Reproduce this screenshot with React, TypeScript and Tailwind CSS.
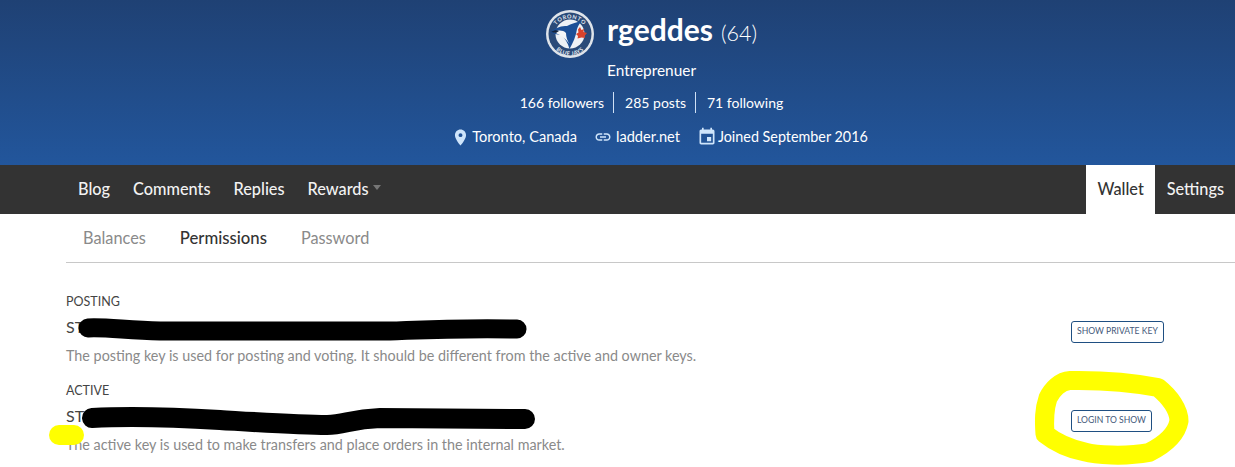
const font = { fontFamily: '"Lato", "Liberation Sans", sans-serif' };

function Logo() {
  return (
    <svg viewBox="0 0 48 48" className="w-12 h-12 shrink-0">
      <defs>
        <path id="ring-top" d="M6.500 26 A17.500 17.500 0 0 1 41.500 26" />
        <path id="ring-bottom" d="M4.500 26 A19.500 19.500 0 0 0 43.500 26" />
      </defs>
      <circle cx="24" cy="24" r="24" fill="#dfe4ea" />
      <circle cx="24" cy="24" r="21.500" fill="#2a4a78" />
      <circle cx="24" cy="24" r="14.500" fill="#eef1f5" />
      <text fontSize="5.500" fontWeight="700" fill="#e8ecf2" letterSpacing="0.6">
        <textPath href="#ring-top" startOffset="50%" textAnchor="middle">TORONTO</textPath>
      </text>
      <text fontSize="5.500" fontWeight="700" fill="#e8ecf2" letterSpacing="0.4">
        <textPath href="#ring-bottom" startOffset="50%" textAnchor="middle">BLUE JAYS</textPath>
      </text>
      <path d="M4.500 22 C10 17 16 16 21 16 C25 14 30 12 36 11 C33 14 32 16 31 19 C30 26 27 33 23.500 39 C22 33 19 28 15 25 C11 24 7 24 4.500 22 Z" fill="#1c4f96" />
      <path d="M8 22 C12 20 17 20 20 23 C20 27 21.500 31 23.500 34 C20 29 16 26 8 22 Z" fill="#f4f6f8" />
      <path d="M5 22 C8 20 11 20 13 21 L10 23 Z" fill="#14233c" />
      <path d="M34 17 L35.500 20 L38 19 L37.500 22 L41 23 L38.500 26 L39 28 L35.500 27.500 L31.500 28.500 L32 26 L30 24 L32.500 22.500 L32 19.500 Z" fill="#d8432c" />
    </svg>
  );
}

function PinIcon() {
  return (
    <svg viewBox="0 0 24 24" className="w-[19px] h-[19px] mr-[2px] fill-[#cfe5fb]">
      <path d="M12 2C8.130 2 5 5.130 5 9c0 5.250 7 13 7 13s7-7.750 7-13c0-3.870-3.130-7-7-7zm0 9.500a2.500 2.500 0 010-5 2.500 2.500 0 010 5z" />
    </svg>
  );
}

function ChainIcon() {
  return (
    <svg viewBox="0 0 24 24" className="w-[18px] h-[18px] ml-[17px] mr-[4px] fill-[#cfe5fb]">
      <path d="M3.900 12c0-1.710 1.390-3.100 3.100-3.100h4V7H7c-2.760 0-5 2.240-5 5s2.240 5 5 5h4v-1.900H7c-1.710 0-3.100-1.390-3.100-3.100zM8 13h8v-2H8v2zm9-6h-4v1.900h4c1.710 0 3.100 1.390 3.100 3.100s-1.390 3.100-3.100 3.100h-4V17h4c2.760 0 5-2.240 5-5s-2.240-5-5-5z" />
    </svg>
  );
}

function EventIcon() {
  return (
    <svg viewBox="0 0 24 24" className="w-[20px] h-[20px] ml-[17px] mr-[1px] fill-[#cfe5fb]">
      <path d="M17 12h-5v5h5v-5zM16 1v2H8V1H6v2H5c-1.110 0-1.990.9-1.990 2L3 19c0 1.100.89 2 2 2h14c1.100 0 2-.9 2-2V5c0-1.100-.9-2-2-2h-1V1h-2zm3 18H5V8h14v11z" />
    </svg>
  );
}

function Scribbles() {
  return (
    <svg viewBox="0 0 1235 467" className="absolute top-0 left-0 w-[1235px] h-[467px] pointer-events-none">
      <path d="M88 328 C105 327 125 330 160 331 L390 331 C420 330 450 328 517 329" fill="none" stroke="#000" strokeWidth="19" strokeLinecap="round" />
      <path d="M92 418 C130 416 170 417 220 420 C270 423 300 425 327 425 C345 425 350 419 380 418 L525 419" fill="none" stroke="#000" strokeWidth="20" strokeLinecap="round" />
      <path d="M59 435 L74 435" fill="none" stroke="#ffff00" strokeWidth="20" strokeLinecap="round" />
      <path d="M1070 380.500 C1100 380 1135 383 1158 387.500 C1170 397 1179 410 1179 421 C1176 437 1160 447 1149 452.500 C1125 457 1095 455 1085 452 C1070 449 1055 442 1045 434 C1044 420 1044 410 1048 398 C1052 390 1060 381 1070 380.500 Z" fill="none" stroke="#ffff00" strokeWidth="19" strokeLinejoin="round" />
    </svg>
  );
}

function KeyRow({ label, note, action, mt }: { label: string; note: string; action: string; mt: string }) {
  return (
    <div className={`flex items-center justify-between pr-[70px] ${mt}`}>
      <div>
        <div className="text-[12.500px] leading-[18px] text-[#444]">{label}</div>
        <div className="text-[16px] leading-[24px] mt-[4px] text-[#444]">ST</div>
        <div className="text-[14.350px] leading-[21px] mt-[6px] text-[#8a8a8a]">{note}</div>
      </div>
      <div className="w-[94px] flex mt-[4px]">
        <button className="h-[22px] px-[5px] rounded-[3px] border border-[#1f4f82] text-[8.600px] text-[#44597a] bg-white uppercase whitespace-nowrap">
          {action}
        </button>
      </div>
    </div>
  );
}

export default function App() {
  return (
    <div className="relative w-[1235px] h-[467px] overflow-hidden bg-white" style={font}>
      <header className="h-[165px] bg-gradient-to-b from-[#1f4174] to-[#22569c] text-white flex flex-col items-center pt-[10px] pl-[68px]">
        <div className="flex items-center gap-[13px] h-[48px]">
          <Logo />
          <div className="flex items-baseline gap-[8px] mb-[10px]">
            <span className="text-[30px] font-bold">rgeddes</span>
            <span className="text-[21.500px] font-light">(64)</span>
          </div>
        </div>
        <div className="text-[15.400px] leading-[20px] mt-[2px]">Entreprenuer</div>
        <div className="flex items-center text-[14px] mt-[12px] h-[20px]">
          <span className="pr-[9px] border-r border-[#cfe0f5]">166 followers</span>
          <span className="pl-[11px] pr-[9px] border-r border-[#cfe0f5]">285 posts</span>
          <span className="pl-[11px]">71 following</span>
        </div>
        <div className="flex items-center text-[14.600px] mt-[15px] h-[20px] ml-[16px]">
          <PinIcon />
          <span>Toronto, Canada</span>
          <ChainIcon />
          <span>ladder.net</span>
          <EventIcon />
          <span className="text-[14.350px]">Joined September 2016</span>
        </div>
      </header>

      <nav className="h-[49px] bg-[#333] flex items-stretch justify-between text-[16.300px] text-[#f2f2f2] font-medium">
        <div className="flex items-center pl-[78px] pb-[1px] gap-[23px]">
          <span>Blog</span>
          <span>Comments</span>
          <span>Replies</span>
          <span className="flex items-center gap-[4px]">
            Rewards
            <span className="border-x-[4.500px] border-x-transparent border-t-[5px] border-t-[#777] mb-[3px]" />
          </span>
        </div>
        <div className="flex items-stretch">
          <span className="w-[69px] pb-[1px] pl-[1px] bg-white text-[#333] flex items-center justify-center">Wallet</span>
          <span className="pl-[12px] pr-[11px] pb-[1px] flex items-center">Settings</span>
        </div>
      </nav>

      <div className="ml-[66px]">
        <div className="h-[49px] flex items-center pl-[17px] gap-[34px] border-b border-[#c8c8c8] text-[16.300px]">
          <span className="text-[#8a8a8a]">Balances</span>
          <span className="text-[#333] font-medium text-[16.700px] mt-[1px]">Permissions</span>
          <span className="text-[#8a8a8a]">Password</span>
        </div>
        <KeyRow
          mt="mt-[30px]"
          label="POSTING"
          action="Show private key"
          note="The posting key is used for posting and voting. It should be different from the active and owner keys."
        />
        <KeyRow
          mt="mt-[16px]"
          label="ACTIVE"
          action="Login to show"
          note="The active key is used to make transfers and place orders in the internal market."
        />
      </div>
      <Scribbles />
    </div>
  );
}
